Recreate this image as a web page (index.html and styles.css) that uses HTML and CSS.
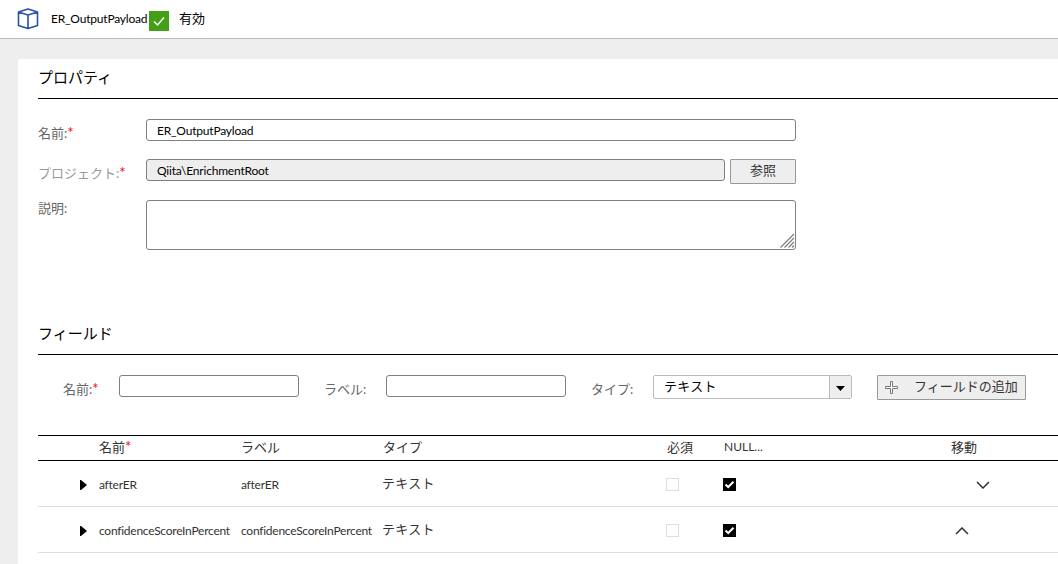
FILE: index.html
```html
<!DOCTYPE html>
<html lang="ja">
<head>
    <meta charset="UTF-8">
    <meta name="viewport" content="width=device-width, initial-scale=1.0">
    <title>ER_OutputPayload</title>
    <link rel="stylesheet" href="styles.css">
</head>
<body>
    <header class="topbar">
        <svg class="cube" width="22" height="22" viewBox="0 0 22 22">
            <path d="M1.5 4 L11 1 L20.5 4 V17.5 L11 20.5 L1.5 17.5 Z M1.5 4 L11 7 L20.5 4 M11 7 V20.5" />
        </svg>
        <span class="asset-name">ER_OutputPayload</span>
        <svg class="valid" width="20" height="20" viewBox="0 0 20 20">
            <rect width="20" height="20" />
            <path d="M5 10.5 L8.5 14 L15 6.5" />
        </svg>
        <span class="status">有効</span>
    </header>

    <main class="panel">
        <section class="properties">
            <h2>プロパティ</h2>
            <div class="form-group">
                <label for="name">名前:<span class="required">*</span></label>
                <input type="text" id="name" value="ER_OutputPayload">
            </div>
            <div class="form-group">
                <label for="project" class="disabled">プロジェクト:<span class="required">*</span></label>
                <input type="text" id="project" value="Qiita\EnrichmentRoot" readonly>
                <button type="button" class="browse">参照</button>
            </div>
            <div class="form-group description">
                <label for="description">説明:</label>
                <div class="description-box">
                    <textarea id="description"></textarea>
                    <svg class="grip" width="15" height="15" viewBox="0 0 15 15">
                        <path d="M0.5 14.5 L14 1 M4.5 14.5 L14 5 M8.5 14.5 L14 9 M12 14.5 L14 12.5" />
                    </svg>
                </div>
            </div>
        </section>

        <section class="fields">
            <h2>フィールド</h2>
            <div class="add-row">
                <label for="fieldName" class="label-name">名前:<span class="required">*</span></label>
                <input type="text" id="fieldName">
                <label for="fieldLabel" class="label-label">ラベル:</label>
                <input type="text" id="fieldLabel">
                <label class="label-type">タイプ:</label>
                <div class="combo">
                    <span class="combo-value">テキスト</span>
                    <span class="combo-arrow">
                        <svg width="9" height="5" viewBox="0 0 9 5"><path d="M0 0 H9 L4.5 5 Z" /></svg>
                    </span>
                </div>
                <button type="button" class="add">
                    <svg width="13" height="13" viewBox="0 0 13 13">
                        <path d="M5.5 0.5 H7.5 V5.5 H12.5 V7.5 H7.5 V12.5 H5.5 V7.5 H0.5 V5.5 H5.5 Z" />
                    </svg>
                    <span>フィールドの追加</span>
                </button>
            </div>

            <table>
                <colgroup>
                    <col class="col-expand">
                    <col class="col-name">
                    <col class="col-label">
                    <col class="col-type">
                    <col class="col-required">
                    <col class="col-null">
                    <col>
                </colgroup>
                <thead>
                    <tr>
                        <th></th>
                        <th>名前<span class="required">*</span></th>
                        <th>ラベル</th>
                        <th>タイプ</th>
                        <th>必須</th>
                        <th class="null">NULL...</th>
                        <th>移動</th>
                    </tr>
                </thead>
                <tbody>
                    <tr>
                        <td class="expand"><svg width="7" height="10" viewBox="0 0 7 10"><path d="M0 0 H1 L7 5 L1 10 H0 Z" /></svg></td>
                        <td class="latin">afterER</td>
                        <td class="latin">afterER</td>
                        <td class="type">テキスト</td>
                        <td><span class="check"></span></td>
                        <td><span class="check checked"><svg width="13" height="13" viewBox="0 0 13 13"><path d="M2.5 6.5 L5.2 9 L10.5 3.7" /></svg></span></td>
                        <td class="move down"><svg width="14" height="8" viewBox="0 0 14 8"><path d="M1 1 L7 7 L13 1" /></svg></td>
                    </tr>
                    <tr>
                        <td class="expand"><svg width="7" height="10" viewBox="0 0 7 10"><path d="M0 0 H1 L7 5 L1 10 H0 Z" /></svg></td>
                        <td class="latin">confidenceScoreInPercent</td>
                        <td class="latin">confidenceScoreInPercent</td>
                        <td class="type">テキスト</td>
                        <td><span class="check"></span></td>
                        <td><span class="check checked"><svg width="13" height="13" viewBox="0 0 13 13"><path d="M2.5 6.5 L5.2 9 L10.5 3.7" /></svg></span></td>
                        <td class="move up"><svg width="14" height="8" viewBox="0 0 14 8"><path d="M1 7 L7 1 L13 7" /></svg></td>
                    </tr>
                </tbody>
            </table>
        </section>
    </main>
</body>
</html>
```
FILE: styles.css
```css
* {
    box-sizing: border-box;
}

body {
    margin: 0;
    height: 564px;
    overflow: hidden;
    background-color: #eee;
    color: #000;
    font-family: Lato, "Noto Sans CJK JP", sans-serif;
    font-size: 13px;
}

svg {
    display: block;
    flex: none;
}

.topbar {
    display: flex;
    height: 39px;
    padding-left: 17px;
    background-color: #fff;
    border-bottom: 1px solid #bbb;
}

.cube {
    margin-top: 8px;
    fill: none;
    stroke: #2a52a5;
    stroke-width: 1.6;
    stroke-linejoin: round;
}

.asset-name {
    width: 98px;
    margin-left: 12px;
    line-height: 38px;
    font-size: 12px;
    letter-spacing: -0.2px;
    white-space: nowrap;
}

.valid {
    margin-top: 11px;
}

.valid rect {
    fill: #43a016;
}

.valid path {
    fill: none;
    stroke: #fff;
    stroke-width: 1.5;
}

.status {
    margin-left: 10px;
    line-height: 36px;
}

.panel {
    height: 520px;
    margin: 20px 0 0 18px;
    padding-left: 20px;
    background-color: #fff;
}

h2 {
    height: 40px;
    margin: 0;
    border-bottom: 1px solid #000;
    font-size: 15px;
    font-weight: normal;
    line-height: 37px;
}

.properties {
    height: 256px;
}

.form-group {
    display: flex;
    align-items: flex-start;
    height: 40px;
}

h2 + .form-group {
    margin-top: 20px;
}

.form-group label {
    width: 108px;
    padding-top: 4px;
}

.form-group.description label {
    padding-top: 0;
    line-height: 18px;
}

label {
    color: #666;
    line-height: 20px;
    white-space: nowrap;
}

label.disabled {
    color: #999;
}

.required {
    color: #f00;
    font-size: 15px;
    line-height: 1;
}

input, textarea {
    height: 22px;
    padding: 0 10px;
    border: 1px solid #808080;
    border-radius: 3px;
    background-color: #fff;
    color: #000;
    font-family: inherit;
    font-size: 12px;
    letter-spacing: -0.2px;
}

#name {
    width: 650px;
}

#project {
    width: 579px;
    background-color: #eee;
}

.description-box {
    position: relative;
    width: 650px;
    height: 50px;
    margin-top: 1px;
}

textarea {
    display: block;
    width: 100%;
    height: 50px;
    resize: none;
}

.grip {
    position: absolute;
    right: 1px;
    bottom: 2px;
    fill: none;
    stroke: #808080;
    stroke-width: 1.3;
}

button {
    height: 25px;
    padding: 0 0 2px;
    border: 1px solid #999;
    border-radius: 1px;
    background-color: #eee;
    color: #333;
    font-family: inherit;
    font-size: 13px;
    line-height: 21px;
}

.browse {
    width: 66px;
    margin-left: 5px;
}

.add-row {
    display: flex;
    align-items: flex-start;
    height: 60px;
    margin-top: 20px;
    padding-left: 25px;
}

.add-row label {
    padding-top: 4px;
}

.add-row input {
    width: 180px;
}

.label-name {
    width: 56px;
}

.label-label {
    width: 62px;
    margin-left: 25px;
}

.label-type {
    width: 62px;
    margin-left: 25px;
}

.combo {
    display: flex;
    width: 199px;
    height: 24px;
    border: 1px solid #bbb;
    border-radius: 2px;
}

.combo-value {
    flex: 1;
    padding-left: 10px;
    letter-spacing: 0.3px;
    line-height: 21px;
}

.combo-arrow {
    display: flex;
    align-items: center;
    justify-content: center;
    width: 22px;
    padding-top: 3px;
    border-left: 1px solid #bbb;
    background-color: #eee;
}

.add {
    display: flex;
    align-items: center;
    width: 149px;
    margin-left: 25px;
    padding-left: 7px;
    white-space: nowrap;
}

.add svg {
    margin: 2px 16px 0 0;
    fill: #fff;
    stroke: #777;
}

table {
    width: 1040px;
    table-layout: fixed;
    border-collapse: separate;
    border-spacing: 0;
}

.col-expand {
    width: 60px;
}

.col-name, .col-label {
    width: 142px;
}

.col-type {
    width: 284px;
}

.col-required {
    width: 57px;
}

.col-null {
    width: 227px;
}

th, td {
    padding: 0;
    color: #333;
    text-align: left;
    white-space: nowrap;
}

th {
    height: 26px;
    padding: 0 0 2px 1px;
    border-top: 1px solid #000;
    border-bottom: 1px solid #000;
    font-weight: normal;
    line-height: 22px;
}

th.null {
    font-size: 12px;
}

td {
    height: 46px;
    padding-top: 2px;
    border-bottom: 1px solid #ddd;
    line-height: 20px;
}

td.latin {
    padding-left: 1px;
    font-size: 12px;
    letter-spacing: -0.25px;
}

td.type {
    padding: 0 0 1px;
    letter-spacing: 0.3px;
}

.expand {
    padding-left: 42px;
}

.check {
    display: block;
    width: 13px;
    height: 13px;
    border: 1px solid #ddd;
}

.checked {
    border: none;
    background-color: #000;
}

.checked path {
    fill: none;
    stroke: #fff;
    stroke-width: 2;
}

.move path {
    fill: none;
    stroke: #333;
    stroke-width: 1.5;
}

.move.down {
    padding-top: 3px;
    padding-left: 26px;
}

.move.up {
    padding-top: 3px;
    padding-left: 5px;
}
```
